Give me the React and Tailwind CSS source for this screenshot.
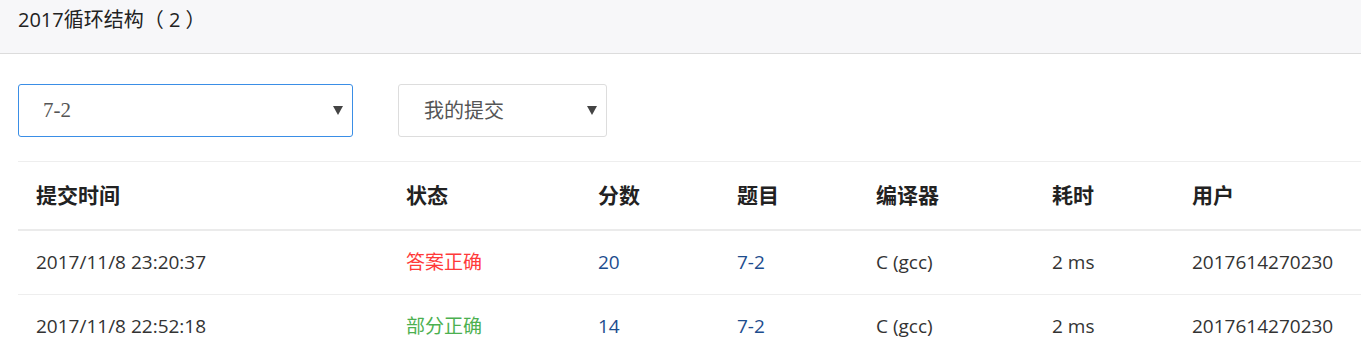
import React from "react";

const cols = [
  { label: "提交时间", w: "w-[370px]" },
  { label: "状态", w: "w-[192px]" },
  { label: "分数", w: "w-[139px]" },
  { label: "题目", w: "w-[139px]" },
  { label: "编译器", w: "w-[176px]" },
  { label: "耗时", w: "w-[140px]" },
  { label: "用户", w: "flex-1" },
];

const rows = [
  { time: "2017/11/8 23:20:37", status: "答案正确", statusCls: "text-[#ff3a3a]", score: "20" },
  { time: "2017/11/8 22:52:18", status: "部分正确", statusCls: "text-[#4cb050]", score: "14" },
];

function Arrow() {
  return (
    <svg width="10" height="9" viewBox="0 0 10 9" className="shrink-0">
      <path d="M0 0 H10 L5 9 Z" fill="#444" />
    </svg>
  );
}

export default function App() {
  return (
    <div
      className="w-[1361px] h-[356px] overflow-hidden bg-white text-[#333]"
      style={{ fontFamily: '"Open Sans", "Noto Sans CJK SC", sans-serif' }}
    >
      <div className="h-[54px] bg-[#f7f7f9] border-b border-[#dcdcdc] pl-[18px] flex items-start pt-[5px]">
        <span className="text-[20px] leading-[30px] text-[#222]">2017循环结构（ 2 ）</span>
      </div>

      <div className="pl-[18px] pt-[30px]">
        <div className="flex gap-[45px]">
          <div className="w-[335px] h-[53px] border border-[#3a8ee6] rounded-[3px] flex items-center justify-between pl-[24px] pr-[9px]">
            <span
              className="text-[21px] text-[#555]"
              style={{ fontFamily: '"Liberation Serif", "Noto Sans CJK SC", serif' }}
            >
              7-2
            </span>
            <Arrow />
          </div>
          <div className="w-[209px] h-[53px] border border-[#dddddd] rounded-[3px] flex items-center justify-between pl-[25px] pr-[9px]">
            <span
              className="text-[20px] text-[#555]"
              style={{ fontFamily: '"Liberation Serif", "Noto Sans CJK SC", serif' }}
            >
              我的提交
            </span>
            <Arrow />
          </div>
        </div>

        <div className="mt-[24px] w-[1343px] border-t border-[#eeeeee]">
          <div className="flex h-[69px] items-center border-b-[2px] border-[#ebebeb]">
            {cols.map((c) => (
              <div key={c.label} className={`${c.w} pl-[18px] text-[21px] font-bold text-[#222]`}>
                {c.label}
              </div>
            ))}
          </div>
          {rows.map((r, i) => (
            <div
              key={i}
              className="flex h-[64px] items-center border-b border-[#eeeeee] text-[19px] text-[#333]"
            >
              <div className="w-[370px] pl-[18px]">{r.time}</div>
              <div className={`w-[192px] pl-[18px] ${r.statusCls}`}>{r.status}</div>
              <div className="w-[139px] pl-[18px] text-[#1d4d8e]">{r.score}</div>
              <div className="w-[139px] pl-[18px] text-[#1d4d8e]">7-2</div>
              <div className="w-[176px] pl-[18px]">C (gcc)</div>
              <div className="w-[140px] pl-[18px]">2 ms</div>
              <div className="flex-1 pl-[18px]">2017614270230</div>
            </div>
          ))}
        </div>
      </div>
    </div>
  );
}
